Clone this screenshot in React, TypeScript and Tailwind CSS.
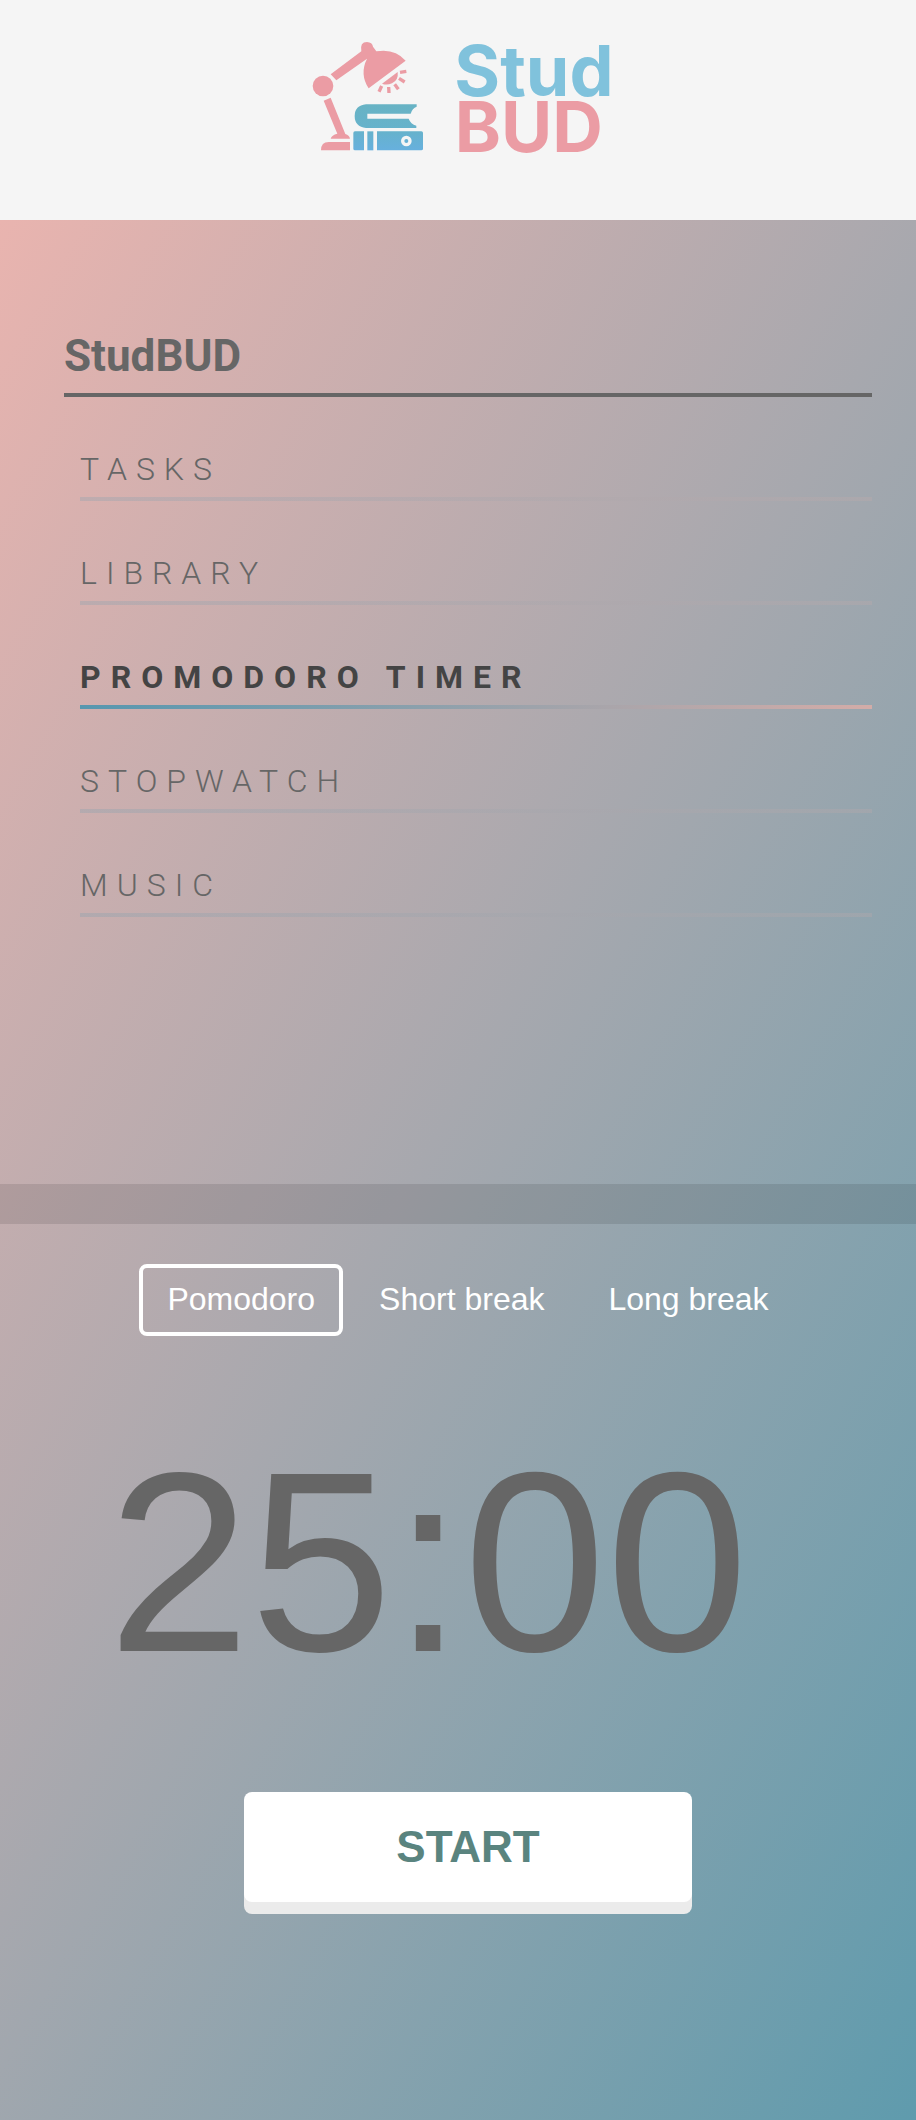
const navItems = [
  { label: "TASKS", active: false },
  { label: "LIBRARY", active: false },
  { label: "PROMODORO TIMER", active: true },
  { label: "STOPWATCH", active: false },
  { label: "MUSIC", active: false },
];

const modes = ["Pomodoro", "Short break", "Long break"];

function Logo() {
  return (
    <svg viewBox="48 0 960 480" className="h-40 w-80" role="img" aria-label="StudBUD">
      <defs>
        <linearGradient id="books" gradientUnits="userSpaceOnUse" x1="0" y1="250" x2="0" y2="392">
          <stop offset="0" stopColor="#68b3c4" />
          <stop offset="0.6" stopColor="#66b2cc" />
          <stop offset="1" stopColor="#67b0de" />
        </linearGradient>
      </defs>
      <g fill="#eb9ca4">
        <circle cx="99" cy="198" r="31" />
        <path d="M122 163 L214 94 Q209 66 231 66 Q247 67 249 80 L259 94 Q314 84 347 122 L236 205 Q208 162 231 116 L139 181 Z" />
        <path d="M276 191 L323 156 Q326 181 306 190 Q290 197 276 191 Z" />
        <path d="M101 242 L122 233 L166 342 Q178 346 180 356 L122 356 Q125 345 142 341 Z" />
        <path d="M93 391 Q93 366 116 366 L180 366 L180 391 Z" />
      </g>
      <g stroke="#eb9ca4" strokeWidth="10" fill="none">
        <path d="M330 157 L349 154" />
        <path d="M327 175 L344 186" />
        <path d="M314 193 L325 208" />
        <path d="M296 201 L297 219" />
        <path d="M275 198 L267 215" />
      </g>
      <g fill="url(#books)">
        <path d="M228 253 L380 253 L380 260 Q367 264 362 281 L232 281 L232 296 L356 296 Q362 312 379 317 L379 324 L228 324 Q194 320 194 288 Q194 257 228 253 Z" />
        <path d="M195 334 H222 V391 H195 Q190 391 190 386 V339 Q190 334 195 334 Z" />
        <path d="M232 334 H250 V391 H232 Z" />
        <path d="M261 334 H394 Q399 334 399 339 V386 Q399 391 394 391 H261 Z" />
      </g>
      <circle cx="349" cy="363" r="11" fill="none" stroke="#f5f5f5" strokeWidth="10" />
      <g fontFamily="Inter, sans-serif" fontWeight="700">
        <text x="493" y="227" fontSize="210" fill="#80c2dc">Stud</text>
        <text x="494" y="397" fontSize="210" fill="#eb9ca4">BUD</text>
      </g>
    </svg>
  );
}

export default function App() {
  return (
    <div className="flex min-h-screen flex-col bg-[#f5f5f5]">
      <header className="flex justify-center pt-5 pb-10 pl-4">
        <Logo />
      </header>

      <div className="flex flex-1 flex-col bg-[linear-gradient(119deg,#e9b4af,#5f9bad)]">
        <nav className="pt-[104px] pr-11 pb-[267px] pl-16 font-[Roboto,sans-serif]">
          <h1 className="border-b-4 border-[#666] pb-1 text-[44px] leading-[65px] font-bold text-[#666]">
            StudBUD
          </h1>
          <ul className="pl-4">
            {navItems.map(({ label, active }) => (
              <li key={label} className="pt-11">
                <a
                  href="#"
                  aria-current={active ? "page" : undefined}
                  className={
                    active
                      ? "block text-[32px] leading-[56px] font-bold tracking-[10px] text-[#444]"
                      : "block text-[32px] leading-[56px] font-light tracking-[9px] text-[#666]"
                  }
                >
                  {label}
                </a>
                <div
                  className={
                    active
                      ? "h-1 bg-[linear-gradient(120deg,#5697af,#d3aca8)]"
                      : "h-1 bg-[linear-gradient(120deg,#5697af,#d3aca8)] opacity-20"
                  }
                />
              </li>
            ))}
          </ul>
        </nav>

        <div className="h-10 bg-black/10" />

        <main className="flex flex-col items-center pt-10 pb-[210px] pl-5 font-['Liberation_Sans',Arial,sans-serif]">
          <div className="flex gap-2">
            {modes.map((mode, i) => (
              <button
                key={mode}
                type="button"
                className={
                  i === 0
                    ? "rounded-lg border-4 border-white px-6 pt-[11px] pb-[13px] text-[32px] leading-10 text-white"
                    : "rounded-lg border-4 border-transparent px-6 pt-[11px] pb-[13px] text-[32px] leading-10 text-white"
                }
              >
                {mode}
              </button>
            ))}
          </div>
          <div className="pt-[78px] pr-20 text-[256px] leading-[296px] text-[#666]">25:00</div>
          <button
            type="button"
            className="mt-[82px] h-[110px] w-[448px] rounded-lg bg-white text-[44px] font-bold text-[#5a847f] shadow-[0_12px_0_#ebebeb]"
          >
            START
          </button>
        </main>
      </div>
    </div>
  );
}
